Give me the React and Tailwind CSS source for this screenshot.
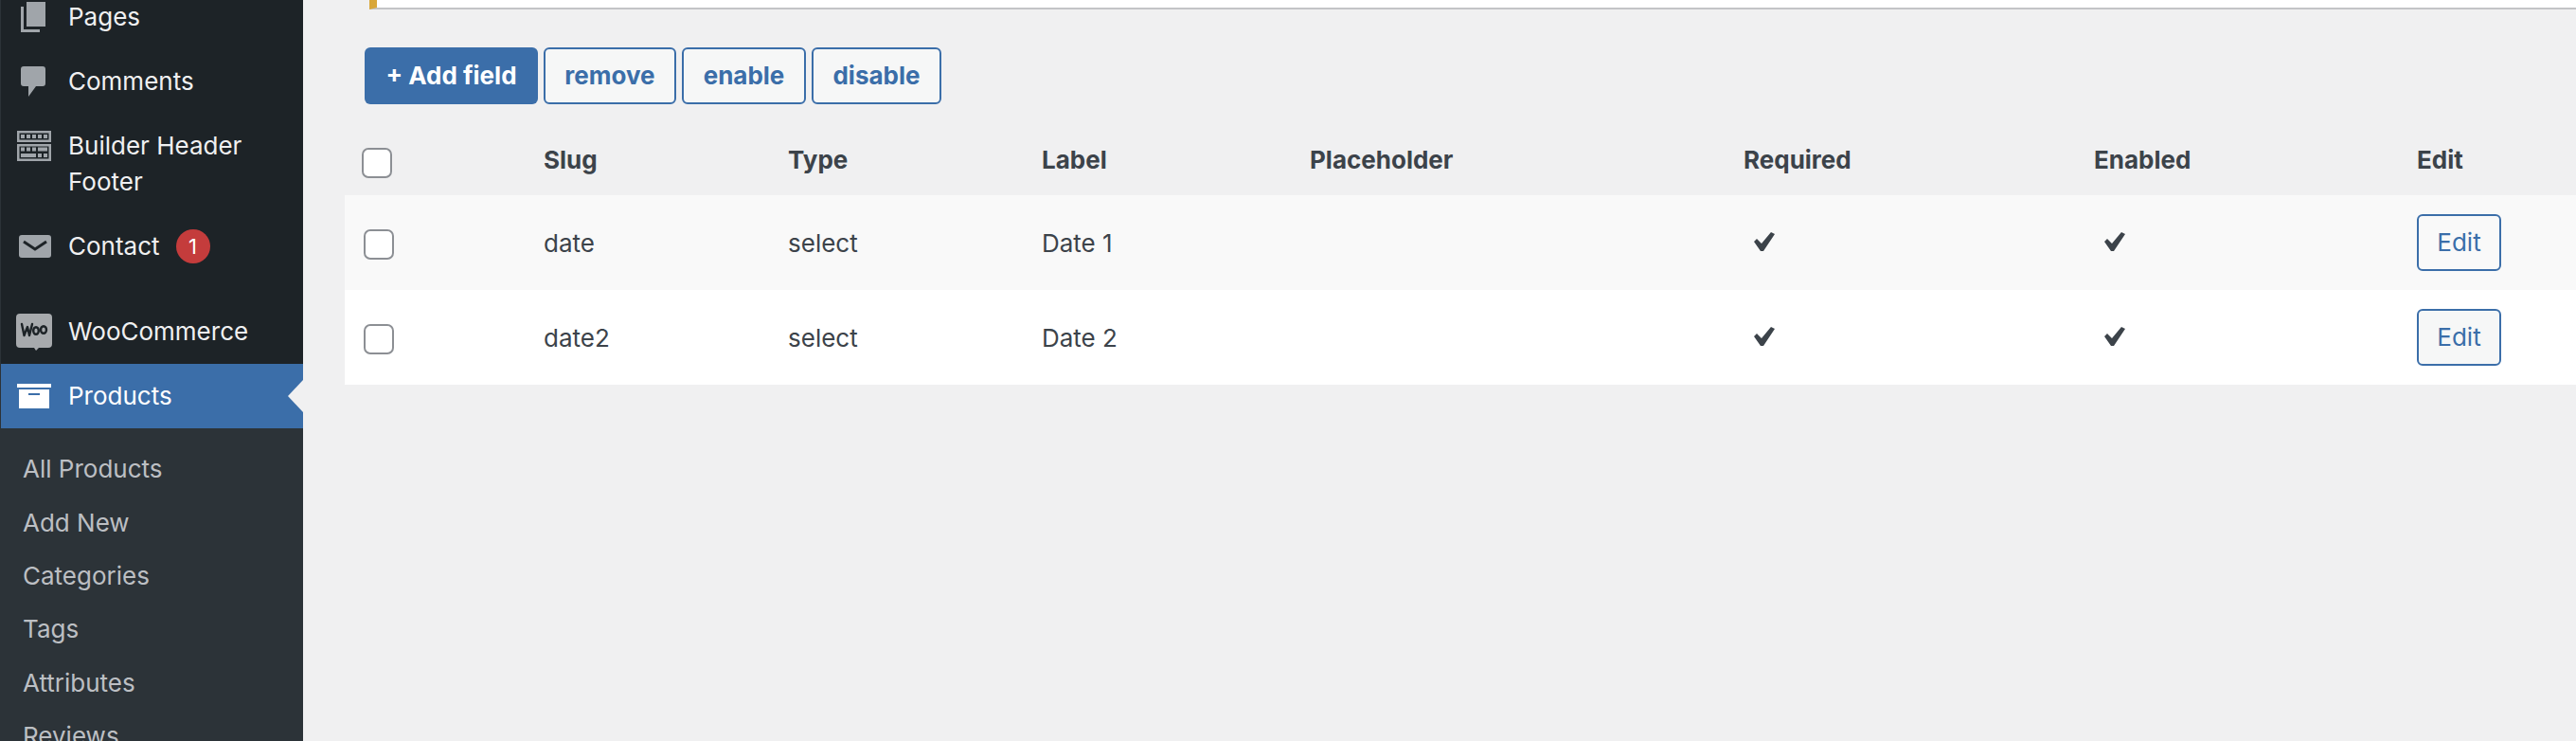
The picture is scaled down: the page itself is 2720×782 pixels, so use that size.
const ICON = '#a0a5aa'

function PagesIcon() {
  return (
    <svg className="-ml-[2px]" width="26" height="32" viewBox="0 0 26 32" fill={ICON}>
      <path d="M6 0h20v26H6z" />
      <path d="M0 5h3v24h17v3H0z" />
    </svg>
  )
}

function CommentIcon() {
  return (
    <svg className="-ml-[2px]" width="26" height="32" viewBox="0 0 26 32" fill={ICON}>
      <path d="M3 0h20a3 3 0 0 1 3 3v15a3 3 0 0 1-3 3H16l-8 11v-11H3a3 3 0 0 1-3-3V3a3 3 0 0 1 3-3z" />
    </svg>
  )
}

function BuilderIcon() {
  const top = [4, 10, 16, 22, 28]
  return (
    <svg width="36" height="32" viewBox="0 0 36 32" fill={ICON}>
      <path fillRule="evenodd" d="M0 0h36v12H0zM2.5 2.5v7h31v-7z" />
      {top.map(x => <rect key={x} x={x} y="4" width="4" height="4" />)}
      <path fillRule="evenodd" d="M0 14h36v18H0zM2.5 16.5v13h31v-13z" />
      <path d="M4 17.5h4v4H4zM10 17.5h4v4h-4zM16 17.5h4v4h-4zM22 17.5h10v4H22zM4 24h16v4H4zM22 24h4v4h-4zM28 24h4v4h-4z" />
    </svg>
  )
}

function MailIcon() {
  return (
    <svg className="ml-[2px]" width="34" height="24" viewBox="0 0 34 24">
      <rect width="34" height="24" rx="3" fill={ICON} />
      <path d="M5 7l12 8 12-8" fill="none" stroke="#1d2327" strokeWidth="3" />
    </svg>
  )
}

function WooIcon() {
  return (
    <svg width="38" height="39" viewBox="0 0 38 39">
      <path d="M4 0h30a4 4 0 0 1 4 4v28a4 4 0 0 1-4 4H24l-3 3-2-3H4a4 4 0 0 1-4-4V4a4 4 0 0 1 4-4z" fill="#a7aaad" />
      <g fill="none" stroke="#1d2327" strokeWidth="2.4" strokeLinecap="round" strokeLinejoin="round">
        <path d="M6 11l2.5 12 3.5-9 2 9 3-12" />
        <ellipse cx="21" cy="18" rx="2.8" ry="3.8" />
        <ellipse cx="29" cy="17" rx="3" ry="3.8" />
      </g>
    </svg>
  )
}

function ProductsIcon() {
  return (
    <svg width="36" height="26" viewBox="0 0 36 26" fill="#fff">
      <path d="M0 0h36v4H0z" />
      <path fillRule="evenodd" d="M2 6h32v20H2zM12 10v2h12v-2z" />
    </svg>
  )
}

function MenuItem({ icon, children, className = '', text = 'text-[#f0f0f1]' }) {
  return (
    <div className={`flex items-center h-[68px] ${className}`}>
      <div className="w-[70px] mr-[1px] shrink-0 flex justify-center">{icon}</div>
      <div className={`flex items-center ${text}`}>{children}</div>
    </div>
  )
}

function Sidebar() {
  const subItems = ['All Products', 'Add New', 'Categories', 'Tags', 'Attributes', 'Reviews']
  return (
    <div className="w-[320px] shrink-0 bg-[#1d2327] border-l border-[#2c3338] -mt-[16px]">
      <MenuItem icon={<PagesIcon />}>Pages</MenuItem>
      <MenuItem icon={<CommentIcon />}>Comments</MenuItem>
      <div className="flex items-center h-[104px] text-[#f0f0f1]">
        <div className="w-[70px] mr-[1px] shrink-0 flex justify-center self-start pt-[18px]"><BuilderIcon /></div>
        <div className="leading-[38px] pt-[2px]">Builder Header<br />Footer</div>
      </div>
      <MenuItem icon={<MailIcon />} className="mb-[24px] pt-[4px]">
        Contact
        <span className="ml-[17px] w-[36px] h-[36px] rounded-full bg-[#c43c3c] text-white text-[22px] flex items-center justify-center">1</span>
      </MenuItem>
      <MenuItem icon={<WooIcon />}>WooCommerce</MenuItem>
      <div className="relative">
        <MenuItem icon={<ProductsIcon />} className="bg-[#3b6ea9]" text="text-white">Products</MenuItem>
        <div className="absolute right-0 top-[17px] w-0 h-0 border-y-[17px] border-y-transparent border-r-[16px] border-r-[#f0f0f1]" />
      </div>
      <div className="bg-[#2c3338] pt-[15px] pb-[20px] text-[#bcbfc3]">
        {subItems.map(s => (
          <div key={s} className="h-[56.4px] flex items-center pl-[23px]">{s}</div>
        ))}
      </div>
    </div>
  )
}

function OutlineButton({ children, className }) {
  return (
    <button className={`h-[60px] rounded-[6px] border-2 border-[#3b6ea9] bg-[#f6f7f7] text-[#3b6ea9] font-bold ${className}`}>
      {children}
    </button>
  )
}

function Check() {
  return (
    <svg width="22" height="20" viewBox="0 0 22 20" fill="#3c434a">
      <path d="M0 10l3-3 5 5L18 0l4 2-12 18H7z" />
    </svg>
  )
}

function Checkbox() {
  return <div className="w-[32px] h-[32px] rounded-[7px] border-2 border-[#8c8f94] bg-white" />
}

const COLS = 'grid grid-cols-[210px_258px_268px_283px_458px_370px_341px_168px] items-center'

function Row({ slug, label, bg, editBg }) {
  return (
    <div className={`${COLS} h-[100px] ${bg}`}>
      <div className="pl-[20px] pt-[3px]"><Checkbox /></div>
      <div className="pt-[2px]">{slug}</div>
      <div className="pt-[2px]">select</div>
      <div className="pt-[2px]">{label}</div>
      <div />
      <div className="pl-[11px] -mt-[2px]"><Check /></div>
      <div className="pl-[11px] -mt-[2px]"><Check /></div>
      <div>
        <button className={`w-[89px] h-[60px] rounded-[6px] border-2 border-[#3b6ea9] text-[#3b6ea9] ${editBg}`}>Edit</button>
      </div>
    </div>
  )
}

export default function App() {
  return (
    <div className="w-[2720px] h-[782px] overflow-hidden flex bg-[#f0f0f1] font-['Inter',sans-serif] text-[26px] leading-[38px] text-[#3c434a]">
      <Sidebar />
      <div className="flex-1 min-w-0 pl-[44px]">
        <div className="ml-[26px] h-[10px] bg-white border-l-[8px] border-l-[#d9a73a] border-b-2 border-b-[#c3c4c7]" />
        <div className="ml-[21px] mt-[40px] flex gap-[6px]">
          <button className="h-[60px] w-[183px] rounded-[6px] bg-[#3b6ea9] text-white font-bold">+ Add field</button>
          <OutlineButton className="w-[140px]">remove</OutlineButton>
          <OutlineButton className="w-[131px]">enable</OutlineButton>
          <OutlineButton className="w-[137px]">disable</OutlineButton>
        </div>
        <div className={`${COLS} h-[96px] font-bold pt-[22px]`}>
          <div className="pl-[18px] pt-[6px]"><Checkbox /></div>
          <div>Slug</div>
          <div>Type</div>
          <div>Label</div>
          <div>Placeholder</div>
          <div>Required</div>
          <div>Enabled</div>
          <div>Edit</div>
        </div>
        <Row slug="date" label="Date 1" bg="bg-[#f9f9f9]" editBg="bg-[#f9f9f9]" />
        <Row slug="date2" label="Date 2" bg="bg-white" editBg="bg-[#f6f7f7]" />
      </div>
    </div>
  )
}
